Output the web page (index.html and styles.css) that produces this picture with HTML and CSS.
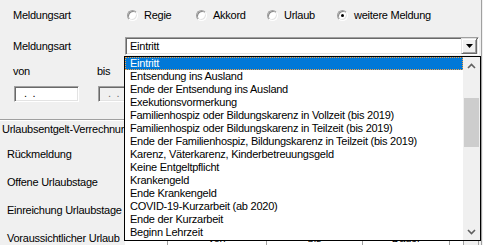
FILE: index.html
```html
<!DOCTYPE html>
<html lang="de">
<head>
    <meta charset="UTF-8">
    <title>Meldungsart</title>
    <link rel="stylesheet" href="styles.css">
</head>
<body>
    <div class="screen">

        <!-- Meldungsart: Radiogruppe -->
        <div class="row-type">
            <span class="label">Meldungsart</span>
            <label class="radio w-regie"><span class="ring"></span>Regie</label>
            <label class="radio w-akkord"><span class="ring"></span>Akkord</label>
            <label class="radio w-urlaub"><span class="ring"></span>Urlaub</label>
            <label class="radio"><span class="ring checked"></span>weitere Meldung</label>
        </div>

        <!-- Meldungsart: Auswahlliste -->
        <div class="row-combo">
            <span class="label label-combo">Meldungsart</span>
            <div class="combo">
                <span class="combo-text">Eintritt</span>
                <span class="combo-btn">
                    <svg width="7" height="4" viewBox="0 0 7 4"><path d="M0 0h7L3.5 4z" fill="#000"/></svg>
                </span>
            </div>
        </div>

        <!-- Zeitraum -->
        <div class="dates">
            <div class="date-field">
                <span class="date-label">von</span>
                <div class="datebox"><span class="mask">. .</span></div>
            </div>
            <div class="date-field disabled">
                <span class="date-label">bis</span>
                <div class="datebox"><span class="mask">. .</span></div>
            </div>
        </div>

        <div class="etched"></div>

        <div class="side">
            <div class="side-title">Urlaubsentgelt-Verrechnung</div>
            <div class="side-row"><span class="side-label">Rückmeldung</span></div>
            <div class="side-row"><span class="side-label">Offene Urlaubstage</span></div>
            <div class="side-row"><span class="side-label">Einreichung Urlaubstage</span></div>
            <div class="side-row">
                <span class="side-label">Voraussichtlicher Urlaub</span>
                <div class="grid-head">
                    <span class="col col-blank"></span>
                    <span class="col col-von">von</span>
                    <span class="col col-bis">bis</span>
                    <span class="col col-dauer">Dauer</span>
                    <span class="grid-btn">&minus;</span>
                </div>
            </div>
        </div>

        <!-- offene Dropdown-Liste liegt über dem Formular -->
        <div class="droplist">
            <ul class="items">
                <li class="selected">Eintritt</li>
                <li>Entsendung ins Ausland</li>
                <li>Ende der Entsendung ins Ausland</li>
                <li>Exekutionsvormerkung</li>
                <li>Familienhospiz oder Bildungskarenz in Vollzeit (bis 2019)</li>
                <li>Familienhospiz oder Bildungskarenz in Teilzeit (bis 2019)</li>
                <li>Ende der Familienhospiz, Bildungskarenz in Teilzeit (bis 2019)</li>
                <li>Karenz, Väterkarenz, Kinderbetreuungsgeld</li>
                <li>Keine Entgeltpflicht</li>
                <li>Krankengeld</li>
                <li>Ende Krankengeld</li>
                <li>COVID-19-Kurzarbeit (ab 2020)</li>
                <li>Ende der Kurzarbeit</li>
                <li>Beginn Lehrzeit</li>
            </ul>
            <div class="scrollbar">
                <span class="arrow">
                    <svg width="9" height="6" viewBox="0 0 9 6"><path d="M1 5l3.5-3.5L8 5" fill="none" stroke="#606060" stroke-width="1.6"/></svg>
                </span>
                <span class="track"><span class="thumb"></span></span>
                <span class="arrow">
                    <svg width="9" height="6" viewBox="0 0 9 6"><path d="M1 1l3.5 3.5L8 1" fill="none" stroke="#606060" stroke-width="1.6"/></svg>
                </span>
            </div>
        </div>

    </div>
</body>
</html>
```

FILE: styles.css
```css
/* Base */
* {
    margin: 0;
    padding: 0;
    box-sizing: border-box;
}

body {
    background-color: #f0f0f0;
    font-family: "Liberation Sans", Arial, sans-serif;
    font-size: 11px;
    letter-spacing: -0.25px;
    color: #000;
    overflow: hidden;
}

.screen {
    position: relative;
    width: 482px;
    height: 245px;
    overflow: hidden;
    border-right: 1px solid #a0a0a0;
}

/* Radio row */
.row-type {
    display: flex;
    align-items: center;
    height: 30px;
}

.label {
    width: 127px;
    padding-left: 13px;
    line-height: 13px;
}

.label-combo {
    width: 125px;
}

.radio {
    display: flex;
    align-items: center;
    gap: 6px;
    line-height: 13px;
}

.w-regie  { width: 69px; }
.w-akkord { width: 71px; }
.w-urlaub { width: 70px; }

.ring {
    position: relative;
    width: 11px;
    height: 11px;
    border-radius: 50%;
    border: 1px solid;
    border-color: #a0a0a0 #ffffff #ffffff #a0a0a0;
    background: #fff;
    box-shadow: inset 1px 1px 0 #8a8a8a, inset -1px -1px 0 #e3e3e3;
}

.ring.checked::after {
    content: "";
    position: absolute;
    left: 3px;
    top: 3px;
    width: 3px;
    height: 3px;
    border-radius: 50%;
    background: #000;
}

/* Combo */
.row-combo {
    display: flex;
    align-items: center;
    margin-top: 7px;
    height: 18px;
}

.combo {
    display: flex;
    align-items: center;
    width: 354px;
    height: 18px;
    background: #fff;
    border: 1px solid;
    border-color: #a0a0a0 #ffffff #ffffff #a0a0a0;
    box-shadow: inset 1px 1px 0 #696969, inset -1px -1px 0 #e3e3e3;
}

.combo-text {
    flex: 1;
    padding-left: 4px;
    line-height: 13px;
}

.combo-btn {
    display: flex;
    align-items: center;
    justify-content: center;
    width: 16px;
    height: 16px;
    margin-right: 1px;
    background: #f0f0f0;
    border: 1px solid;
    border-color: #e3e3e3 #696969 #696969 #e3e3e3;
    box-shadow: inset 1px 1px 0 #fff, inset -1px -1px 0 #a0a0a0;
}

/* Dates */
.dates {
    display: flex;
    margin-top: 10px;
    padding-left: 13px;
}

.date-field {
    display: flex;
    flex-direction: column;
    width: 84px;
}

.date-label {
    line-height: 13px;
}

.datebox {
    width: 65px;
    height: 16px;
    margin-top: 8px;
    margin-left: 1px;
    background: #fff;
    border: 1px solid;
    border-color: #a0a0a0 #ffffff #ffffff #a0a0a0;
    box-shadow: inset 1px 1px 0 #696969, inset -1px -1px 0 #e3e3e3;
}

.disabled .datebox {
    background: #f0f0f0;
    color: #6d6d6d;
}

.mask {
    display: block;
    padding-left: 9px;
    line-height: 13px;
    word-spacing: 3px;
}

.etched {
    height: 2px;
    margin-top: 17px;
    border-top: 1px solid #a0a0a0;
    border-bottom: 1px solid #fff;
}

/* Left labels */
.side {
    display: flex;
    flex-direction: column;
}

.side-title {
    padding-left: 2px;
    line-height: 13px;
    height: 16px;
    padding-top: 2px;
}

.side-row {
    display: flex;
    align-items: center;
    height: 28px;
    padding-left: 7px;
}

.side-row:nth-child(2) {
    margin-top: 3px;
}

.side-label {
    width: 118px;
    line-height: 13px;
    white-space: nowrap;
}

/* Table header behind the list */
.grid-head {
    display: flex;
    align-self: flex-start;
    margin-top: 5px;
    height: 18px;
    background: #fff;
}

.col {
    height: 18px;
    line-height: 13px;
    text-align: center;
    border-right: 1px solid #a0a0a0;
    padding-top: 3px;
}

.col-blank { width: 43px; }
.col-von   { width: 99px; }
.col-bis   { width: 96px; }
.col-dauer { width: 87px; }

.grid-btn {
    width: 16px;
    height: 18px;
    margin-left: 13px;
    text-align: center;
    line-height: 13px;
    padding-top: 2px;
    border: 1px solid #a0a0a0;
    background: #f0f0f0;
}

/* Open dropdown list */
.droplist {
    position: absolute;
    left: 124px;
    top: 56px;
    width: 357px;
    height: 185px;
    display: flex;
    background: #fff;
    border: 1px solid #000;
}

.items {
    flex: 1;
    list-style: none;
}

.items li {
    height: 13px;
    line-height: 13px;
    padding-left: 5px;
    white-space: nowrap;
    overflow: hidden;
}

.items li.selected {
    background: #0078d7;
    color: #fff;
    outline: 1px dotted #f5a040;
    outline-offset: -1px;
}

.scrollbar {
    display: flex;
    flex-direction: column;
    width: 17px;
    background: #f0f0f0;
}

.arrow {
    display: flex;
    align-items: center;
    justify-content: center;
    height: 17px;
}

.track {
    flex: 1;
    padding-top: 24px;
}

.thumb {
    display: block;
    width: 15px;
    height: 49px;
    margin-left: 1px;
    background: #cdcdcd;
}
```
